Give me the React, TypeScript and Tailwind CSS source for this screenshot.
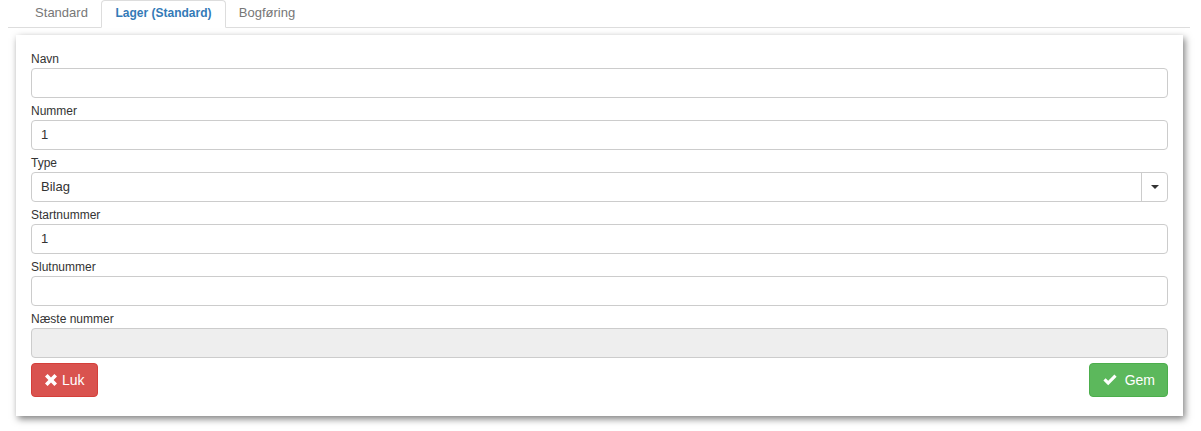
import React from 'react';

const TABS = [
    { label: 'Standard', active: false, width: 'w-[75px]' },
    { label: 'Lager (Standard)', active: true, width: 'w-[125px]' },
    { label: 'Bogføring', active: false, width: 'w-[78px]' },
];

const FIELDS = [
    { label: 'Navn', value: '' },
    { label: 'Nummer', value: '1' },
    { label: 'Type', value: 'Bilag', select: true },
    { label: 'Startnummer', value: '1' },
    { label: 'Slutnummer', value: '' },
    { label: 'Næste nummer', value: '', disabled: true },
];

const TimesIcon = () => (
    <svg width="12" height="12" viewBox="0 0 12 12" className="shrink-0">
        <path d="M0 2.6 2.6 0 6 3.4 9.4 0 12 2.6 8.6 6 12 9.4 9.4 12 6 8.6 2.6 12 0 9.4 3.4 6Z" fill="white" />
    </svg>
);

const CheckIcon = () => (
    <svg width="14" height="12" viewBox="0 0 14 12" className="shrink-0">
        <path d="M0.4 6.4 2.6 4.2 5.2 6.8 11.4 0.6 13.6 2.8 5.2 11.2Z" fill="white" />
    </svg>
);

const App: React.FC = () => {
    return (
        <div className="w-[1201px] h-[431px] bg-white text-[#333] font-['Liberation_Sans',Arial,sans-serif] overflow-hidden">
            {/* Tabs */}
            <div className="ml-[8px] mr-[11px] h-[28px] border-b border-[#ddd] flex pl-[16px]">
                {TABS.map((tab) => (
                    <div
                        key={tab.label}
                        className={`${tab.width} h-[28px] mr-[2px] pb-[2px] flex items-center justify-center rounded-t-[4px] border ${
                            tab.active
                                ? 'border-[#ddd] border-b-white bg-white text-[#337ab7] text-[12px] font-bold'
                                : 'border-transparent text-[#777] text-[13px]'
                        }`}
                    >
                        {tab.label}
                    </div>
                ))}
            </div>

            {/* Panel */}
            <div className="ml-[16px] mt-[7px] w-[1167px] h-[381px] bg-white shadow-[2px_3px_7px_rgba(0,0,0,0.5)] px-[15px] pt-[16px]">
                {FIELDS.map((f) => (
                    <div key={f.label} className="mb-[5px]">
                        <div className="text-[12px] leading-[17px]">{f.label}</div>
                        <div
                            className={`h-[30px] border border-[#ccc] rounded-[4px] flex items-center text-[13px] ${
                                f.disabled ? 'bg-[#eee]' : 'bg-white'
                            }`}
                        >
                            <div className="flex-1 pl-[9px]">{f.value}</div>
                            {f.select && (
                                <div className="w-[26px] h-full border-l border-[#ccc] flex items-center justify-center">
                                    <div className="w-0 h-0 border-l-[4px] border-r-[4px] border-t-[4px] border-l-transparent border-r-transparent border-t-[#333]" />
                                </div>
                            )}
                        </div>
                    </div>
                ))}

                <div className="flex justify-between">
                    <button className="h-[34px] pl-[13px] pr-[12px] flex items-center gap-[5px] bg-[#d9534f] border border-[#d43f3a] rounded-[4px] text-white text-[14px]">
                        <TimesIcon />
                        <span>Luk</span>
                    </button>
                    <button className="h-[34px] pl-[13px] pr-[12px] flex items-center gap-[8px] bg-[#5cb85c] border border-[#4cae4c] rounded-[4px] text-white text-[14px]">
                        <CheckIcon />
                        <span>Gem</span>
                    </button>
                </div>
            </div>
        </div>
    );
};

export default App;
